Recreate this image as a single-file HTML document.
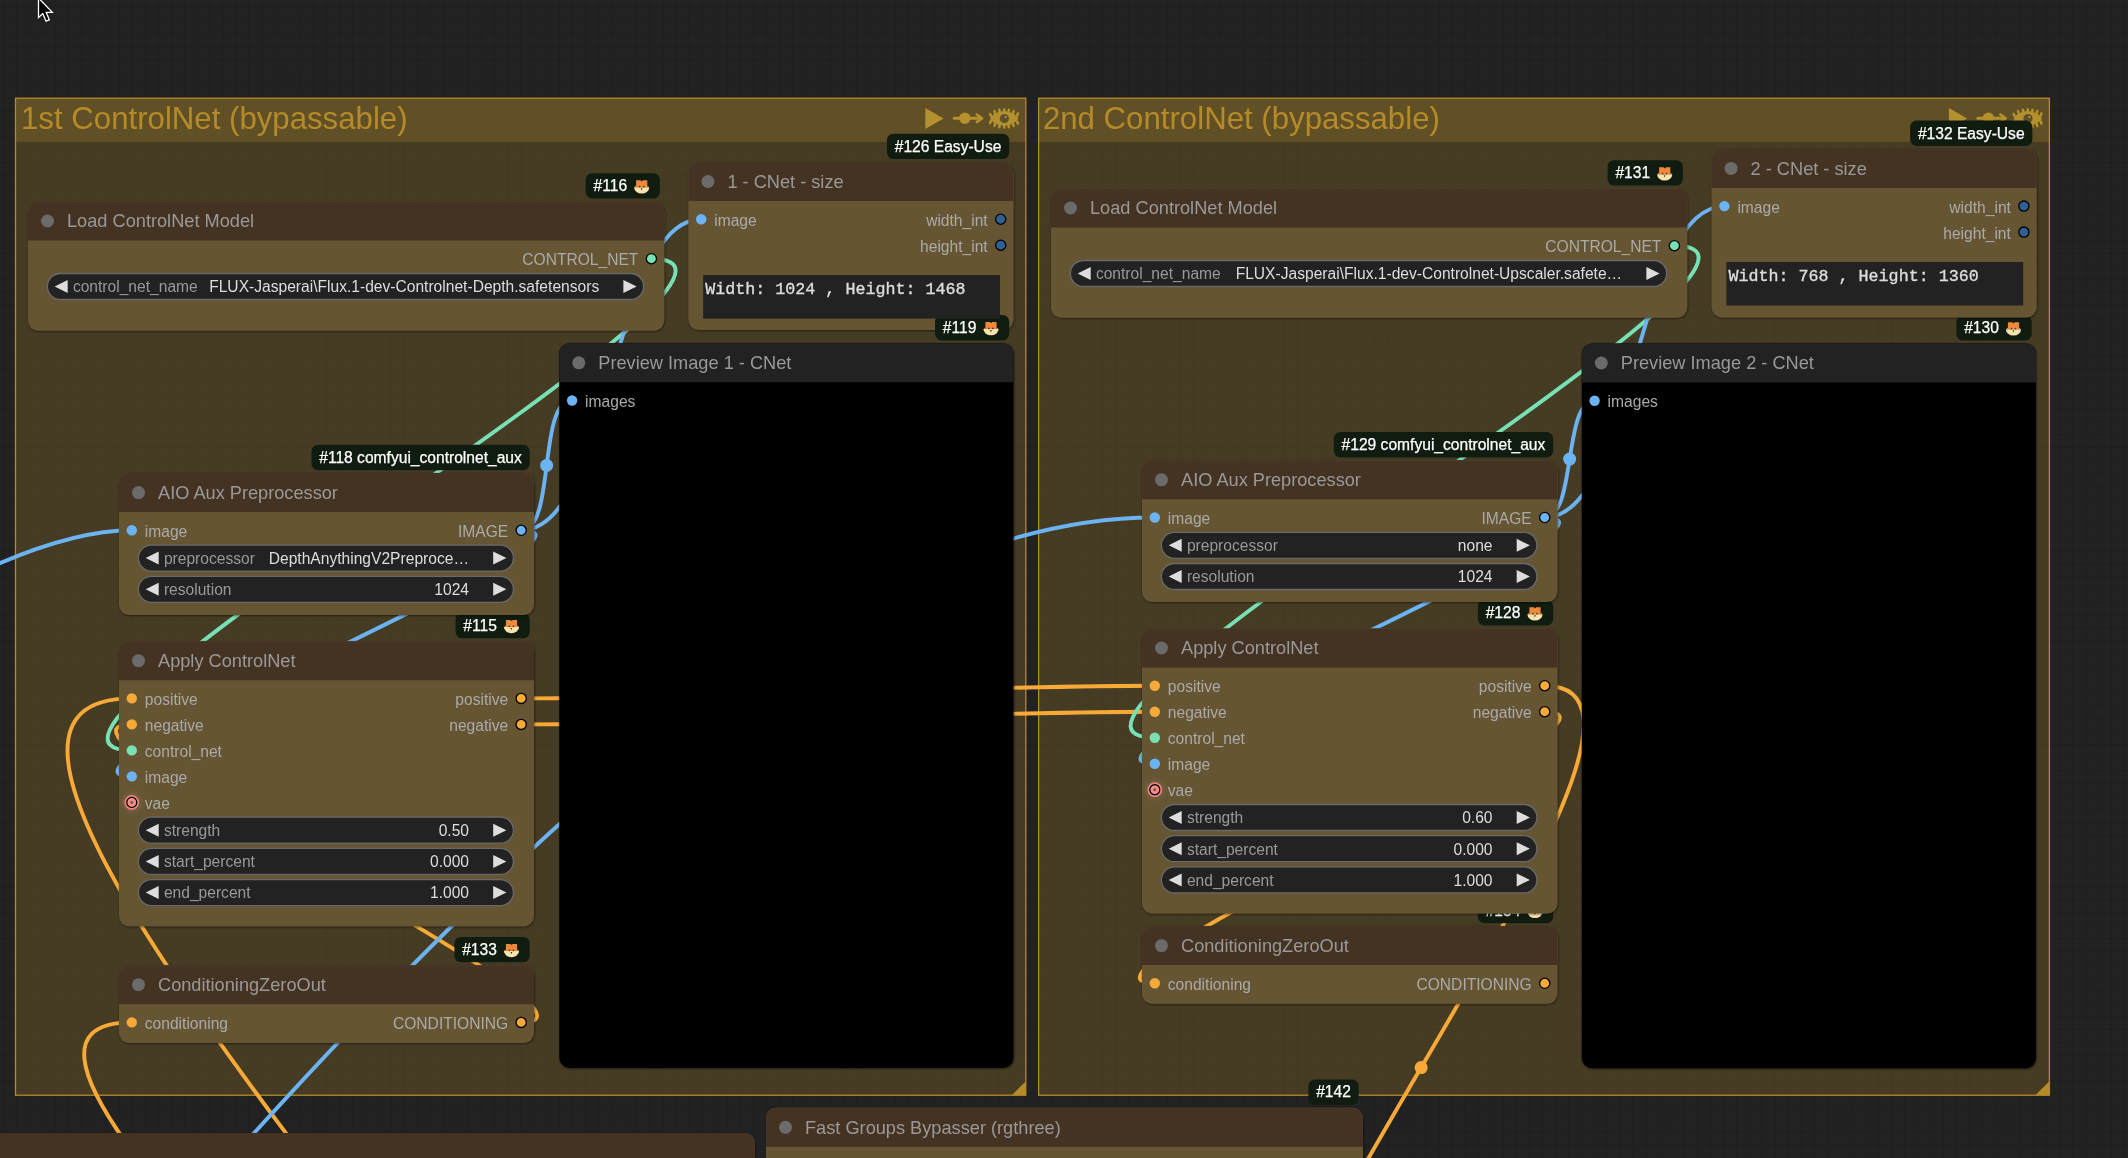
<!DOCTYPE html>
<html><head><meta charset="utf-8"><title>ComfyUI</title>
<style>html,body{margin:0;padding:0;background:#222;overflow:hidden;width:2128px;height:1158px} svg{display:block;will-change:transform}</style>
</head><body><svg width="2128" height="1158" viewBox="0 0 2128 1158"><rect x="0" y="0" width="2128" height="1158" fill="#222"/>
<defs><pattern id="grid" patternUnits="userSpaceOnUse" x="2.8" y="7.0" width="12.934" height="12.934"><rect x="0" y="0" width="1" height="12.934" fill="#000" fill-opacity="0.10"/><rect x="0" y="0" width="12.934" height="1" fill="#000" fill-opacity="0.10"/></pattern><filter id="sh" x="-5%" y="-5%" width="110%" height="110%"><feDropShadow dx="0.6" dy="0.8" stdDeviation="1.3" flood-color="#000" flood-opacity="0.55"/></filter><filter id="glow" x="-100%" y="-100%" width="300%" height="300%"><feGaussianBlur stdDeviation="2.5"/></filter></defs>
<rect x="0" y="0" width="2128" height="1158" fill="url(#grid)"/>
<rect x="15.5" y="98.2" width="1010.3" height="997.0" fill="#b58b2a" fill-opacity="0.25"/>
<rect x="15.5" y="98.2" width="1010.3" height="43.7" fill="#b58b2a" fill-opacity="0.25"/>
<rect x="15.5" y="98.2" width="1010.3" height="997.0" fill="none" stroke="#b58b2a" stroke-width="1.3"/>
<path d="M1025.8 1095.2 L1011.8 1095.2 L1025.8 1081.2 Z" fill="#b58b2a"/>
<text x="21.0" y="129.2" font-family="'Liberation Sans', sans-serif" font-size="31.2" fill="#b58b2a">1st ControlNet (bypassable)</text>
<path d="M925.3 108.0 L943.5999999999999 118.5 L925.3 129.1 Z" fill="#b3912f"/>
<path d="M954.3 118.30000000000001 H978.8" stroke="#b3912f" stroke-width="3.1" stroke-linecap="round"/>
<circle cx="964.8" cy="118.30000000000001" r="5.7" fill="#b3912f"/>
<path d="M976.8 114.5 L982.0999999999999 118.30000000000001 L976.8 122.1" fill="none" stroke="#b3912f" stroke-width="2.6" stroke-linecap="round" stroke-linejoin="round"/>
<path d="M990.90 116.01 L990.10 114.01" stroke="#b3912f" stroke-width="2.5" stroke-linecap="round"/>
<path d="M990.90 120.99 L990.10 122.99" stroke="#b3912f" stroke-width="2.5" stroke-linecap="round"/>
<path d="M995.00 113.09 L994.45 111.09" stroke="#b3912f" stroke-width="2.5" stroke-linecap="round"/>
<path d="M995.00 123.91 L994.45 125.91" stroke="#b3912f" stroke-width="2.5" stroke-linecap="round"/>
<path d="M999.60 111.78 L999.32 109.78" stroke="#b3912f" stroke-width="2.5" stroke-linecap="round"/>
<path d="M999.60 125.22 L999.32 127.22" stroke="#b3912f" stroke-width="2.5" stroke-linecap="round"/>
<path d="M1004.20 111.40 L1004.20 109.40" stroke="#b3912f" stroke-width="2.5" stroke-linecap="round"/>
<path d="M1004.20 125.60 L1004.20 127.60" stroke="#b3912f" stroke-width="2.5" stroke-linecap="round"/>
<path d="M1008.60 111.75 L1008.86 109.75" stroke="#b3912f" stroke-width="2.5" stroke-linecap="round"/>
<path d="M1008.60 125.25 L1008.86 127.25" stroke="#b3912f" stroke-width="2.5" stroke-linecap="round"/>
<path d="M1013.10 112.97 L1013.63 110.97" stroke="#b3912f" stroke-width="2.5" stroke-linecap="round"/>
<path d="M1013.10 124.03 L1013.63 126.03" stroke="#b3912f" stroke-width="2.5" stroke-linecap="round"/>
<path d="M1017.10 115.53 L1017.87 113.53" stroke="#b3912f" stroke-width="2.5" stroke-linecap="round"/>
<path d="M1017.10 121.47 L1017.87 123.47" stroke="#b3912f" stroke-width="2.5" stroke-linecap="round"/>
<path d="M989.9999999999999 118.5 C996.1999999999999 108.9 1012.1999999999999 108.9 1018.4 118.5 C1012.1999999999999 128.1 996.1999999999999 128.1 989.9999999999999 118.5 Z" fill="#b3912f"/>
<circle cx="1004.4" cy="118.5" r="4.6" fill="#5f5128"/>
<circle cx="1005.8" cy="116.9" r="1.1" fill="#b3912f"/>
<rect x="1038.6" y="98.2" width="1010.8000000000002" height="997.0" fill="#b58b2a" fill-opacity="0.25"/>
<rect x="1038.6" y="98.2" width="1010.8000000000002" height="43.7" fill="#b58b2a" fill-opacity="0.25"/>
<rect x="1038.6" y="98.2" width="1010.8000000000002" height="997.0" fill="none" stroke="#b58b2a" stroke-width="1.3"/>
<path d="M2049.4 1095.2 L2035.4 1095.2 L2049.4 1081.2 Z" fill="#b58b2a"/>
<text x="1042.8999999999999" y="129.2" font-family="'Liberation Sans', sans-serif" font-size="31.2" fill="#b58b2a">2nd ControlNet (bypassable)</text>
<path d="M1948.9 108.0 L1967.2 118.5 L1948.9 129.1 Z" fill="#b3912f"/>
<path d="M1977.9 118.30000000000001 H2002.4" stroke="#b3912f" stroke-width="3.1" stroke-linecap="round"/>
<circle cx="1988.4" cy="118.30000000000001" r="5.7" fill="#b3912f"/>
<path d="M2000.4 114.5 L2005.7 118.30000000000001 L2000.4 122.1" fill="none" stroke="#b3912f" stroke-width="2.6" stroke-linecap="round" stroke-linejoin="round"/>
<path d="M2014.50 116.01 L2013.70 114.01" stroke="#b3912f" stroke-width="2.5" stroke-linecap="round"/>
<path d="M2014.50 120.99 L2013.70 122.99" stroke="#b3912f" stroke-width="2.5" stroke-linecap="round"/>
<path d="M2018.60 113.09 L2018.05 111.09" stroke="#b3912f" stroke-width="2.5" stroke-linecap="round"/>
<path d="M2018.60 123.91 L2018.05 125.91" stroke="#b3912f" stroke-width="2.5" stroke-linecap="round"/>
<path d="M2023.20 111.78 L2022.92 109.78" stroke="#b3912f" stroke-width="2.5" stroke-linecap="round"/>
<path d="M2023.20 125.22 L2022.92 127.22" stroke="#b3912f" stroke-width="2.5" stroke-linecap="round"/>
<path d="M2027.80 111.40 L2027.80 109.40" stroke="#b3912f" stroke-width="2.5" stroke-linecap="round"/>
<path d="M2027.80 125.60 L2027.80 127.60" stroke="#b3912f" stroke-width="2.5" stroke-linecap="round"/>
<path d="M2032.20 111.75 L2032.46 109.75" stroke="#b3912f" stroke-width="2.5" stroke-linecap="round"/>
<path d="M2032.20 125.25 L2032.46 127.25" stroke="#b3912f" stroke-width="2.5" stroke-linecap="round"/>
<path d="M2036.70 112.97 L2037.23 110.97" stroke="#b3912f" stroke-width="2.5" stroke-linecap="round"/>
<path d="M2036.70 124.03 L2037.23 126.03" stroke="#b3912f" stroke-width="2.5" stroke-linecap="round"/>
<path d="M2040.70 115.53 L2041.47 113.53" stroke="#b3912f" stroke-width="2.5" stroke-linecap="round"/>
<path d="M2040.70 121.47 L2041.47 123.47" stroke="#b3912f" stroke-width="2.5" stroke-linecap="round"/>
<path d="M2013.6000000000001 118.5 C2019.8000000000002 108.9 2035.8000000000002 108.9 2042.0000000000002 118.5 C2035.8000000000002 128.1 2019.8000000000002 128.1 2013.6000000000001 118.5 Z" fill="#b3912f"/>
<circle cx="2028.0000000000002" cy="118.5" r="4.6" fill="#5f5128"/>
<circle cx="2029.4" cy="116.9" r="1.1" fill="#b3912f"/>
<path d="M651.40 258.70 C830.24 258.70 -47.04 750.40 131.80 750.40" fill="none" stroke="#77e1b5" stroke-width="3.9"/>
<circle cx="391.60" cy="504.55" r="6.5" fill="#77e1b5"/>
<path d="M521.20 530.30 C556.06 530.30 537.24 400.50 572.10 400.50" fill="none" stroke="#6cb3f3" stroke-width="3.9"/>
<circle cx="546.65" cy="465.40" r="6.5" fill="#6cb3f3"/>
<path d="M521.20 530.30 C611.06 530.30 611.34 219.20 701.20 219.20" fill="none" stroke="#6cb3f3" stroke-width="3.9"/>
<circle cx="611.20" cy="374.75" r="6.5" fill="#6cb3f3"/>
<path d="M521.20 530.30 C636.36 530.30 16.64 776.40 131.80 776.40" fill="none" stroke="#6cb3f3" stroke-width="3.9"/>
<circle cx="326.50" cy="653.35" r="6.5" fill="#6cb3f3"/>
<path d="M-637.00 882.50 C-425.59 882.50 -79.61 530.30 131.80 530.30" fill="none" stroke="#6cb3f3" stroke-width="3.9"/>
<circle cx="-252.60" cy="706.40" r="6.5" fill="#6cb3f3"/>
<path d="M521.20 698.40 C679.63 698.40 996.37 685.70 1154.80 685.70" fill="none" stroke="#f7aa37" stroke-width="3.9"/>
<circle cx="838.00" cy="692.05" r="6.5" fill="#f7aa37"/>
<path d="M521.20 724.40 C679.63 724.40 996.37 711.70 1154.80 711.70" fill="none" stroke="#f7aa37" stroke-width="3.9"/>
<circle cx="838.00" cy="718.05" r="6.5" fill="#f7aa37"/>
<path d="M521.20 1022.40 C643.79 1022.40 9.21 724.40 131.80 724.40" fill="none" stroke="#f7aa37" stroke-width="3.9"/>
<circle cx="326.50" cy="873.40" r="6.5" fill="#f7aa37"/>
<path d="M817.80 2055.90 C1198.05 2055.90 -248.45 698.40 131.80 698.40" fill="none" stroke="#f7aa37" stroke-width="3.9"/>
<circle cx="474.80" cy="1377.15" r="6.5" fill="#f7aa37"/>
<path d="M853.00 2047.70 C1166.39 2047.70 -181.59 1022.40 131.80 1022.40" fill="none" stroke="#f7aa37" stroke-width="3.9"/>
<circle cx="492.40" cy="1535.05" r="6.5" fill="#f7aa37"/>
<path d="M-1171.30 2343.10 C-432.06 2343.10 415.56 517.50 1154.80 517.50" fill="none" stroke="#6cb3f3" stroke-width="3.9"/>
<circle cx="-8.25" cy="1430.30" r="6.5" fill="#6cb3f3"/>
<path d="M1674.40 245.70 C1853.29 245.70 975.91 737.70 1154.80 737.70" fill="none" stroke="#77e1b5" stroke-width="3.9"/>
<circle cx="1414.60" cy="491.70" r="6.5" fill="#77e1b5"/>
<path d="M1544.70 517.50 C1576.45 517.50 1562.85 400.70 1594.60 400.70" fill="none" stroke="#6cb3f3" stroke-width="3.9"/>
<circle cx="1569.65" cy="459.10" r="6.5" fill="#6cb3f3"/>
<path d="M1544.70 517.50 C1634.58 517.50 1634.52 206.10 1724.40 206.10" fill="none" stroke="#6cb3f3" stroke-width="3.9"/>
<circle cx="1634.55" cy="361.80" r="6.5" fill="#6cb3f3"/>
<path d="M1544.70 517.50 C1659.98 517.50 1039.52 763.70 1154.80 763.70" fill="none" stroke="#6cb3f3" stroke-width="3.9"/>
<circle cx="1349.75" cy="640.60" r="6.5" fill="#6cb3f3"/>
<path d="M1544.70 685.70 C1745.37 685.70 1096.93 1449.40 1297.60 1449.40" fill="none" stroke="#f7aa37" stroke-width="3.9"/>
<circle cx="1421.15" cy="1067.55" r="6.5" fill="#f7aa37"/>
<path d="M1544.70 711.70 C1663.49 711.70 1036.01 983.30 1154.80 983.30" fill="none" stroke="#f7aa37" stroke-width="3.9"/>
<circle cx="1349.75" cy="847.50" r="6.5" fill="#f7aa37"/>
<g filter="url(#sh)"><rect x="-200" y="1133" width="955" height="200" rx="10.4" fill="#665533"/></g>
<path d="M-200 1172 V1143.4 A10.4 10.4 0 0 1 -189.6 1133 H744.6 A10.4 10.4 0 0 1 755 1143.4 V1172 Z" fill="#443322"/>
<circle cx="-180.5" cy="1152.5" r="6.5" fill="#6b6b6b"/>
<g filter="url(#sh)"><rect x="766" y="1107.8" width="597" height="200" rx="10.4" fill="#665533"/></g>
<path d="M766 1146.8 V1118.2 A10.4 10.4 0 0 1 776.4 1107.8 H1352.6 A10.4 10.4 0 0 1 1363 1118.2 V1146.8 Z" fill="#443322"/>
<circle cx="785.5" cy="1127.3" r="6.5" fill="#6b6b6b"/>
<text x="805" y="1133.7" font-family="'Liberation Sans', sans-serif" font-size="18.2" fill="#999">Fast Groups Bypasser (rgthree)</text>
<rect x="1308.40" y="1079.50" width="50.30" height="25.4" rx="6.5" fill="#111c10"/>
<text x="1316.20" y="1097.40" font-family="'Liberation Sans', sans-serif" font-size="15.6" fill="#fff" stroke="#fff" stroke-width="0.25">#142</text>
<g filter="url(#sh)"><rect x="28" y="201.5" width="636.2" height="129.2" rx="10.4" fill="#665533"/></g>
<path d="M28 240.5 V211.9 A10.4 10.4 0 0 1 38.4 201.5 H653.8000000000001 A10.4 10.4 0 0 1 664.2 211.9 V240.5 Z" fill="#443322"/>
<circle cx="47.5" cy="221.0" r="6.5" fill="#6b6b6b"/>
<text x="67" y="227.4" font-family="'Liberation Sans', sans-serif" font-size="18.2" fill="#999">Load ControlNet Model</text>
<circle cx="651.40" cy="258.70" r="5.1" fill="#77e1b5" stroke="#000" stroke-width="1.3"/>
<text x="638.40" y="265.30" font-family="'Liberation Sans', sans-serif" font-size="15.6" fill="#aaa" text-anchor="end">CONTROL_NET</text>
<rect x="47.40" y="273.50" width="596.20" height="26.0" rx="13.0" fill="#222" stroke="#6a6a6a" stroke-width="1.3"/>
<path d="M67.70 280.00 L54.70 286.50 L67.70 293.00 Z" fill="#ddd"/>
<path d="M623.40 280.00 L636.60 286.50 L623.40 293.00 Z" fill="#ddd"/>
<text x="72.90" y="292.30" font-family="'Liberation Sans', sans-serif" font-size="15.6" fill="#999">control_net_name</text>
<text x="599.20" y="292.30" font-family="'Liberation Sans', sans-serif" font-size="15.6" fill="#ddd" text-anchor="end">FLUX-Jasperai\Flux.1-dev-Controlnet-Depth.safetensors</text>
<rect x="585.75" y="173.20" width="74.15" height="25.4" rx="6.5" fill="#111c10"/>
<text x="593.55" y="191.10" font-family="'Liberation Sans', sans-serif" font-size="15.6" fill="#fff" stroke="#fff" stroke-width="0.25">#116</text>
<g transform="translate(641.70,180.10)"><path d="M-5.6 0.2 H-1.2 L0 1.3 L1.2 0.2 H5.6 V7.2 H-5.6 Z" fill="#f0883a"/><path d="M-7.6 7.1 H7.6 A7.6 6.3 0 0 1 -7.6 7.1 Z" fill="#fbe3ad"/><path d="M-7.6 7.2 L-5.6 5.5 V7.2 Z M7.6 7.2 L5.6 5.5 V7.2 Z" fill="#f0883a"/><circle cx="-2.1" cy="6.5" r="0.9" fill="#5a3a20"/><circle cx="1.9" cy="6.5" r="0.9" fill="#5a3a20"/><path d="M-1 8.2 H0.8 L-0.1 10.5 Z" fill="#4a3020"/></g>
<g filter="url(#sh)"><rect x="688.4" y="162" width="325.1" height="168" rx="10.4" fill="#665533"/></g>
<path d="M688.4 201 V172.4 A10.4 10.4 0 0 1 698.8 162 H1003.1 A10.4 10.4 0 0 1 1013.5 172.4 V201 Z" fill="#443322"/>
<circle cx="707.9" cy="181.5" r="6.5" fill="#6b6b6b"/>
<text x="727.4" y="187.9" font-family="'Liberation Sans', sans-serif" font-size="18.2" fill="#999">1 - CNet - size</text>
<circle cx="701.20" cy="219.20" r="5.2" fill="#6cb3f3"/>
<text x="714.20" y="225.80" font-family="'Liberation Sans', sans-serif" font-size="15.6" fill="#aaa">image</text>
<circle cx="1000.70" cy="219.20" r="5.1" fill="#2f5f96" stroke="#000" stroke-width="1.3"/>
<text x="987.70" y="225.80" font-family="'Liberation Sans', sans-serif" font-size="15.6" fill="#aaa" text-anchor="end">width_int</text>
<circle cx="1000.70" cy="245.20" r="5.1" fill="#2f5f96" stroke="#000" stroke-width="1.3"/>
<text x="987.70" y="251.80" font-family="'Liberation Sans', sans-serif" font-size="15.6" fill="#aaa" text-anchor="end">height_int</text>
<rect x="886.94" y="133.70" width="122.26" height="25.4" rx="6.5" fill="#111c10"/>
<text x="894.74" y="151.60" font-family="'Liberation Sans', sans-serif" font-size="15.6" fill="#fff" stroke="#fff" stroke-width="0.25">#126 Easy-Use</text>
<g filter="url(#sh)"><rect x="559.3" y="343.3" width="454.2" height="724.8" rx="10.4" fill="#000"/></g>
<path d="M559.3 382.3 V353.7 A10.4 10.4 0 0 1 569.6999999999999 343.3 H1003.1 A10.4 10.4 0 0 1 1013.5 353.7 V382.3 Z" fill="#222"/>
<circle cx="578.8" cy="362.8" r="6.5" fill="#6b6b6b"/>
<text x="598.3" y="369.2" font-family="'Liberation Sans', sans-serif" font-size="18.2" fill="#999">Preview Image 1 - CNet</text>
<circle cx="572.10" cy="400.50" r="5.2" fill="#6cb3f3"/>
<text x="585.10" y="407.10" font-family="'Liberation Sans', sans-serif" font-size="15.6" fill="#aaa">images</text>
<rect x="935.05" y="315.00" width="74.15" height="25.4" rx="6.5" fill="#111c10"/>
<text x="942.85" y="332.90" font-family="'Liberation Sans', sans-serif" font-size="15.6" fill="#fff" stroke="#fff" stroke-width="0.25">#119</text>
<g transform="translate(991.00,321.90)"><path d="M-5.6 0.2 H-1.2 L0 1.3 L1.2 0.2 H5.6 V7.2 H-5.6 Z" fill="#f0883a"/><path d="M-7.6 7.1 H7.6 A7.6 6.3 0 0 1 -7.6 7.1 Z" fill="#fbe3ad"/><path d="M-7.6 7.2 L-5.6 5.5 V7.2 Z M7.6 7.2 L5.6 5.5 V7.2 Z" fill="#f0883a"/><circle cx="-2.1" cy="6.5" r="0.9" fill="#5a3a20"/><circle cx="1.9" cy="6.5" r="0.9" fill="#5a3a20"/><path d="M-1 8.2 H0.8 L-0.1 10.5 Z" fill="#4a3020"/></g>
<g filter="url(#sh)"><rect x="119" y="965.2" width="415" height="77.8" rx="10.4" fill="#665533"/></g>
<path d="M119 1004.2 V975.6 A10.4 10.4 0 0 1 129.4 965.2 H523.6 A10.4 10.4 0 0 1 534 975.6 V1004.2 Z" fill="#443322"/>
<circle cx="138.5" cy="984.7" r="6.5" fill="#6b6b6b"/>
<text x="158" y="991.1" font-family="'Liberation Sans', sans-serif" font-size="18.2" fill="#999">ConditioningZeroOut</text>
<circle cx="131.80" cy="1022.40" r="5.2" fill="#f7aa37"/>
<text x="144.80" y="1029.00" font-family="'Liberation Sans', sans-serif" font-size="15.6" fill="#aaa">conditioning</text>
<circle cx="521.20" cy="1022.40" r="5.1" fill="#f7aa37" stroke="#000" stroke-width="1.3"/>
<text x="508.20" y="1029.00" font-family="'Liberation Sans', sans-serif" font-size="15.6" fill="#aaa" text-anchor="end">CONDITIONING</text>
<rect x="454.40" y="936.90" width="75.30" height="25.4" rx="6.5" fill="#111c10"/>
<text x="462.20" y="954.80" font-family="'Liberation Sans', sans-serif" font-size="15.6" fill="#fff" stroke="#fff" stroke-width="0.25">#133</text>
<g transform="translate(511.50,943.80)"><path d="M-5.6 0.2 H-1.2 L0 1.3 L1.2 0.2 H5.6 V7.2 H-5.6 Z" fill="#f0883a"/><path d="M-7.6 7.1 H7.6 A7.6 6.3 0 0 1 -7.6 7.1 Z" fill="#fbe3ad"/><path d="M-7.6 7.2 L-5.6 5.5 V7.2 Z M7.6 7.2 L5.6 5.5 V7.2 Z" fill="#f0883a"/><circle cx="-2.1" cy="6.5" r="0.9" fill="#5a3a20"/><circle cx="1.9" cy="6.5" r="0.9" fill="#5a3a20"/><path d="M-1 8.2 H0.8 L-0.1 10.5 Z" fill="#4a3020"/></g>
<g filter="url(#sh)"><rect x="119" y="641.2" width="415" height="285" rx="10.4" fill="#665533"/></g>
<path d="M119 680.2 V651.6 A10.4 10.4 0 0 1 129.4 641.2 H523.6 A10.4 10.4 0 0 1 534 651.6 V680.2 Z" fill="#443322"/>
<circle cx="138.5" cy="660.7" r="6.5" fill="#6b6b6b"/>
<text x="158" y="667.1" font-family="'Liberation Sans', sans-serif" font-size="18.2" fill="#999">Apply ControlNet</text>
<circle cx="131.80" cy="698.40" r="5.2" fill="#f7aa37"/>
<text x="144.80" y="705.00" font-family="'Liberation Sans', sans-serif" font-size="15.6" fill="#aaa">positive</text>
<circle cx="131.80" cy="724.40" r="5.2" fill="#f7aa37"/>
<text x="144.80" y="731.00" font-family="'Liberation Sans', sans-serif" font-size="15.6" fill="#aaa">negative</text>
<circle cx="131.80" cy="750.40" r="5.2" fill="#77e1b5"/>
<text x="144.80" y="757.00" font-family="'Liberation Sans', sans-serif" font-size="15.6" fill="#aaa">control_net</text>
<circle cx="131.80" cy="776.40" r="5.2" fill="#6cb3f3"/>
<text x="144.80" y="783.00" font-family="'Liberation Sans', sans-serif" font-size="15.6" fill="#aaa">image</text>
<circle cx="131.80" cy="802.40" r="9" fill="#fff" fill-opacity="0.10" filter="url(#glow)"/>
<circle cx="131.80" cy="802.40" r="6.3" fill="none" stroke="#f07c7c" stroke-width="2.2"/>
<circle cx="131.80" cy="802.40" r="4.9" fill="none" stroke="#000" stroke-width="1.4"/>
<circle cx="131.80" cy="802.40" r="3.0" fill="none" stroke="#ff8f8f" stroke-width="2.6"/>
<text x="144.80" y="809.00" font-family="'Liberation Sans', sans-serif" font-size="15.6" fill="#aaa">vae</text>
<circle cx="521.20" cy="698.40" r="5.1" fill="#f7aa37" stroke="#000" stroke-width="1.3"/>
<text x="508.20" y="705.00" font-family="'Liberation Sans', sans-serif" font-size="15.6" fill="#aaa" text-anchor="end">positive</text>
<circle cx="521.20" cy="724.40" r="5.1" fill="#f7aa37" stroke="#000" stroke-width="1.3"/>
<text x="508.20" y="731.00" font-family="'Liberation Sans', sans-serif" font-size="15.6" fill="#aaa" text-anchor="end">negative</text>
<rect x="138.40" y="817.20" width="375.00" height="26.0" rx="13.0" fill="#222" stroke="#6a6a6a" stroke-width="1.3"/>
<path d="M158.70 823.70 L145.70 830.20 L158.70 836.70 Z" fill="#ddd"/>
<path d="M493.20 823.70 L506.40 830.20 L493.20 836.70 Z" fill="#ddd"/>
<text x="163.90" y="836.00" font-family="'Liberation Sans', sans-serif" font-size="15.6" fill="#999">strength</text>
<text x="469.00" y="836.00" font-family="'Liberation Sans', sans-serif" font-size="15.6" fill="#ddd" text-anchor="end">0.50</text>
<rect x="138.40" y="848.40" width="375.00" height="26.0" rx="13.0" fill="#222" stroke="#6a6a6a" stroke-width="1.3"/>
<path d="M158.70 854.90 L145.70 861.40 L158.70 867.90 Z" fill="#ddd"/>
<path d="M493.20 854.90 L506.40 861.40 L493.20 867.90 Z" fill="#ddd"/>
<text x="163.90" y="867.20" font-family="'Liberation Sans', sans-serif" font-size="15.6" fill="#999">start_percent</text>
<text x="469.00" y="867.20" font-family="'Liberation Sans', sans-serif" font-size="15.6" fill="#ddd" text-anchor="end">0.000</text>
<rect x="138.40" y="879.60" width="375.00" height="26.0" rx="13.0" fill="#222" stroke="#6a6a6a" stroke-width="1.3"/>
<path d="M158.70 886.10 L145.70 892.60 L158.70 899.10 Z" fill="#ddd"/>
<path d="M493.20 886.10 L506.40 892.60 L493.20 899.10 Z" fill="#ddd"/>
<text x="163.90" y="898.40" font-family="'Liberation Sans', sans-serif" font-size="15.6" fill="#999">end_percent</text>
<text x="469.00" y="898.40" font-family="'Liberation Sans', sans-serif" font-size="15.6" fill="#ddd" text-anchor="end">1.000</text>
<rect x="455.55" y="612.90" width="74.15" height="25.4" rx="6.5" fill="#111c10"/>
<text x="463.35" y="630.80" font-family="'Liberation Sans', sans-serif" font-size="15.6" fill="#fff" stroke="#fff" stroke-width="0.25">#115</text>
<g transform="translate(511.50,619.80)"><path d="M-5.6 0.2 H-1.2 L0 1.3 L1.2 0.2 H5.6 V7.2 H-5.6 Z" fill="#f0883a"/><path d="M-7.6 7.1 H7.6 A7.6 6.3 0 0 1 -7.6 7.1 Z" fill="#fbe3ad"/><path d="M-7.6 7.2 L-5.6 5.5 V7.2 Z M7.6 7.2 L5.6 5.5 V7.2 Z" fill="#f0883a"/><circle cx="-2.1" cy="6.5" r="0.9" fill="#5a3a20"/><circle cx="1.9" cy="6.5" r="0.9" fill="#5a3a20"/><path d="M-1 8.2 H0.8 L-0.1 10.5 Z" fill="#4a3020"/></g>
<g filter="url(#sh)"><rect x="119" y="473.1" width="415" height="141.9" rx="10.4" fill="#665533"/></g>
<path d="M119 512.1 V483.5 A10.4 10.4 0 0 1 129.4 473.1 H523.6 A10.4 10.4 0 0 1 534 483.5 V512.1 Z" fill="#443322"/>
<circle cx="138.5" cy="492.6" r="6.5" fill="#6b6b6b"/>
<text x="158" y="499.0" font-family="'Liberation Sans', sans-serif" font-size="18.2" fill="#999">AIO Aux Preprocessor</text>
<circle cx="131.80" cy="530.30" r="5.2" fill="#6cb3f3"/>
<text x="144.80" y="536.90" font-family="'Liberation Sans', sans-serif" font-size="15.6" fill="#aaa">image</text>
<circle cx="521.20" cy="530.30" r="5.1" fill="#6cb3f3" stroke="#000" stroke-width="1.3"/>
<text x="508.20" y="536.90" font-family="'Liberation Sans', sans-serif" font-size="15.6" fill="#aaa" text-anchor="end">IMAGE</text>
<rect x="138.40" y="545.10" width="375.00" height="26.0" rx="13.0" fill="#222" stroke="#6a6a6a" stroke-width="1.3"/>
<path d="M158.70 551.60 L145.70 558.10 L158.70 564.60 Z" fill="#ddd"/>
<path d="M493.20 551.60 L506.40 558.10 L493.20 564.60 Z" fill="#ddd"/>
<text x="163.90" y="563.90" font-family="'Liberation Sans', sans-serif" font-size="15.6" fill="#999">preprocessor</text>
<text x="469.00" y="563.90" font-family="'Liberation Sans', sans-serif" font-size="15.6" fill="#ddd" text-anchor="end">DepthAnythingV2Preproce…</text>
<rect x="138.40" y="576.30" width="375.00" height="26.0" rx="13.0" fill="#222" stroke="#6a6a6a" stroke-width="1.3"/>
<path d="M158.70 582.80 L145.70 589.30 L158.70 595.80 Z" fill="#ddd"/>
<path d="M493.20 582.80 L506.40 589.30 L493.20 595.80 Z" fill="#ddd"/>
<text x="163.90" y="595.10" font-family="'Liberation Sans', sans-serif" font-size="15.6" fill="#999">resolution</text>
<text x="469.00" y="595.10" font-family="'Liberation Sans', sans-serif" font-size="15.6" fill="#ddd" text-anchor="end">1024</text>
<rect x="311.46" y="444.80" width="218.24" height="25.4" rx="6.5" fill="#111c10"/>
<text x="319.26" y="462.70" font-family="'Liberation Sans', sans-serif" font-size="15.6" fill="#fff" stroke="#fff" stroke-width="0.25">#118 comfyui_controlnet_aux</text>
<g filter="url(#sh)"><rect x="1581.8" y="343.5" width="454.2" height="724.8" rx="10.4" fill="#000"/></g>
<path d="M1581.8 382.5 V353.9 A10.4 10.4 0 0 1 1592.2 343.5 H2025.6 A10.4 10.4 0 0 1 2036.0 353.9 V382.5 Z" fill="#222"/>
<circle cx="1601.3" cy="363.0" r="6.5" fill="#6b6b6b"/>
<text x="1620.8" y="369.4" font-family="'Liberation Sans', sans-serif" font-size="18.2" fill="#999">Preview Image 2 - CNet</text>
<circle cx="1594.60" cy="400.70" r="5.2" fill="#6cb3f3"/>
<text x="1607.60" y="407.30" font-family="'Liberation Sans', sans-serif" font-size="15.6" fill="#aaa">images</text>
<rect x="1956.40" y="315.20" width="75.30" height="25.4" rx="6.5" fill="#111c10"/>
<text x="1964.20" y="333.10" font-family="'Liberation Sans', sans-serif" font-size="15.6" fill="#fff" stroke="#fff" stroke-width="0.25">#130</text>
<g transform="translate(2013.50,322.10)"><path d="M-5.6 0.2 H-1.2 L0 1.3 L1.2 0.2 H5.6 V7.2 H-5.6 Z" fill="#f0883a"/><path d="M-7.6 7.1 H7.6 A7.6 6.3 0 0 1 -7.6 7.1 Z" fill="#fbe3ad"/><path d="M-7.6 7.2 L-5.6 5.5 V7.2 Z M7.6 7.2 L5.6 5.5 V7.2 Z" fill="#f0883a"/><circle cx="-2.1" cy="6.5" r="0.9" fill="#5a3a20"/><circle cx="1.9" cy="6.5" r="0.9" fill="#5a3a20"/><path d="M-1 8.2 H0.8 L-0.1 10.5 Z" fill="#4a3020"/></g>
<g filter="url(#sh)"><rect x="1051" y="188.5" width="636.2" height="129.2" rx="10.4" fill="#665533"/></g>
<path d="M1051 227.5 V198.9 A10.4 10.4 0 0 1 1061.4 188.5 H1676.8 A10.4 10.4 0 0 1 1687.2 198.9 V227.5 Z" fill="#443322"/>
<circle cx="1070.5" cy="208.0" r="6.5" fill="#6b6b6b"/>
<text x="1090" y="214.4" font-family="'Liberation Sans', sans-serif" font-size="18.2" fill="#999">Load ControlNet Model</text>
<circle cx="1674.40" cy="245.70" r="5.1" fill="#77e1b5" stroke="#000" stroke-width="1.3"/>
<text x="1661.40" y="252.30" font-family="'Liberation Sans', sans-serif" font-size="15.6" fill="#aaa" text-anchor="end">CONTROL_NET</text>
<rect x="1070.40" y="260.50" width="596.20" height="26.0" rx="13.0" fill="#222" stroke="#6a6a6a" stroke-width="1.3"/>
<path d="M1090.70 267.00 L1077.70 273.50 L1090.70 280.00 Z" fill="#ddd"/>
<path d="M1646.40 267.00 L1659.60 273.50 L1646.40 280.00 Z" fill="#ddd"/>
<text x="1095.90" y="279.30" font-family="'Liberation Sans', sans-serif" font-size="15.6" fill="#999">control_net_name</text>
<text x="1622.20" y="279.30" font-family="'Liberation Sans', sans-serif" font-size="15.6" fill="#ddd" text-anchor="end">FLUX-Jasperai\Flux.1-dev-Controlnet-Upscaler.safete…</text>
<rect x="1607.60" y="160.20" width="75.30" height="25.4" rx="6.5" fill="#111c10"/>
<text x="1615.40" y="178.10" font-family="'Liberation Sans', sans-serif" font-size="15.6" fill="#fff" stroke="#fff" stroke-width="0.25">#131</text>
<g transform="translate(1664.70,167.10)"><path d="M-5.6 0.2 H-1.2 L0 1.3 L1.2 0.2 H5.6 V7.2 H-5.6 Z" fill="#f0883a"/><path d="M-7.6 7.1 H7.6 A7.6 6.3 0 0 1 -7.6 7.1 Z" fill="#fbe3ad"/><path d="M-7.6 7.2 L-5.6 5.5 V7.2 Z M7.6 7.2 L5.6 5.5 V7.2 Z" fill="#f0883a"/><circle cx="-2.1" cy="6.5" r="0.9" fill="#5a3a20"/><circle cx="1.9" cy="6.5" r="0.9" fill="#5a3a20"/><path d="M-1 8.2 H0.8 L-0.1 10.5 Z" fill="#4a3020"/></g>
<g filter="url(#sh)"><rect x="1711.6" y="148.9" width="325.1" height="168.5" rx="10.4" fill="#665533"/></g>
<path d="M1711.6 187.9 V159.3 A10.4 10.4 0 0 1 1722.0 148.9 H2026.2999999999997 A10.4 10.4 0 0 1 2036.6999999999998 159.3 V187.9 Z" fill="#443322"/>
<circle cx="1731.1" cy="168.4" r="6.5" fill="#6b6b6b"/>
<text x="1750.6" y="174.8" font-family="'Liberation Sans', sans-serif" font-size="18.2" fill="#999">2 - CNet - size</text>
<circle cx="1724.40" cy="206.10" r="5.2" fill="#6cb3f3"/>
<text x="1737.40" y="212.70" font-family="'Liberation Sans', sans-serif" font-size="15.6" fill="#aaa">image</text>
<circle cx="2023.90" cy="206.10" r="5.1" fill="#2f5f96" stroke="#000" stroke-width="1.3"/>
<text x="2010.90" y="212.70" font-family="'Liberation Sans', sans-serif" font-size="15.6" fill="#aaa" text-anchor="end">width_int</text>
<circle cx="2023.90" cy="232.10" r="5.1" fill="#2f5f96" stroke="#000" stroke-width="1.3"/>
<text x="2010.90" y="238.70" font-family="'Liberation Sans', sans-serif" font-size="15.6" fill="#aaa" text-anchor="end">height_int</text>
<rect x="1910.14" y="120.60" width="122.26" height="25.4" rx="6.5" fill="#111c10"/>
<text x="1917.94" y="138.50" font-family="'Liberation Sans', sans-serif" font-size="15.6" fill="#fff" stroke="#fff" stroke-width="0.25">#132 Easy-Use</text>
<g filter="url(#sh)"><rect x="1142" y="926.1" width="415.5" height="77.6" rx="10.4" fill="#665533"/></g>
<path d="M1142 965.1 V936.5 A10.4 10.4 0 0 1 1152.4 926.1 H1547.1 A10.4 10.4 0 0 1 1557.5 936.5 V965.1 Z" fill="#443322"/>
<circle cx="1161.5" cy="945.6" r="6.5" fill="#6b6b6b"/>
<text x="1181" y="952.0" font-family="'Liberation Sans', sans-serif" font-size="18.2" fill="#999">ConditioningZeroOut</text>
<circle cx="1154.80" cy="983.30" r="5.2" fill="#f7aa37"/>
<text x="1167.80" y="989.90" font-family="'Liberation Sans', sans-serif" font-size="15.6" fill="#aaa">conditioning</text>
<circle cx="1544.70" cy="983.30" r="5.1" fill="#f7aa37" stroke="#000" stroke-width="1.3"/>
<text x="1531.70" y="989.90" font-family="'Liberation Sans', sans-serif" font-size="15.6" fill="#aaa" text-anchor="end">CONDITIONING</text>
<rect x="1477.90" y="897.80" width="75.30" height="25.4" rx="6.5" fill="#111c10"/>
<text x="1485.70" y="915.70" font-family="'Liberation Sans', sans-serif" font-size="15.6" fill="#fff" stroke="#fff" stroke-width="0.25">#134</text>
<g transform="translate(1535.00,904.70)"><path d="M-5.6 0.2 H-1.2 L0 1.3 L1.2 0.2 H5.6 V7.2 H-5.6 Z" fill="#f0883a"/><path d="M-7.6 7.1 H7.6 A7.6 6.3 0 0 1 -7.6 7.1 Z" fill="#fbe3ad"/><path d="M-7.6 7.2 L-5.6 5.5 V7.2 Z M7.6 7.2 L5.6 5.5 V7.2 Z" fill="#f0883a"/><circle cx="-2.1" cy="6.5" r="0.9" fill="#5a3a20"/><circle cx="1.9" cy="6.5" r="0.9" fill="#5a3a20"/><path d="M-1 8.2 H0.8 L-0.1 10.5 Z" fill="#4a3020"/></g>
<g filter="url(#sh)"><rect x="1142" y="628.5" width="415.5" height="285" rx="10.4" fill="#665533"/></g>
<path d="M1142 667.5 V638.9 A10.4 10.4 0 0 1 1152.4 628.5 H1547.1 A10.4 10.4 0 0 1 1557.5 638.9 V667.5 Z" fill="#443322"/>
<circle cx="1161.5" cy="648.0" r="6.5" fill="#6b6b6b"/>
<text x="1181" y="654.4" font-family="'Liberation Sans', sans-serif" font-size="18.2" fill="#999">Apply ControlNet</text>
<circle cx="1154.80" cy="685.70" r="5.2" fill="#f7aa37"/>
<text x="1167.80" y="692.30" font-family="'Liberation Sans', sans-serif" font-size="15.6" fill="#aaa">positive</text>
<circle cx="1154.80" cy="711.70" r="5.2" fill="#f7aa37"/>
<text x="1167.80" y="718.30" font-family="'Liberation Sans', sans-serif" font-size="15.6" fill="#aaa">negative</text>
<circle cx="1154.80" cy="737.70" r="5.2" fill="#77e1b5"/>
<text x="1167.80" y="744.30" font-family="'Liberation Sans', sans-serif" font-size="15.6" fill="#aaa">control_net</text>
<circle cx="1154.80" cy="763.70" r="5.2" fill="#6cb3f3"/>
<text x="1167.80" y="770.30" font-family="'Liberation Sans', sans-serif" font-size="15.6" fill="#aaa">image</text>
<circle cx="1154.80" cy="789.70" r="9" fill="#fff" fill-opacity="0.10" filter="url(#glow)"/>
<circle cx="1154.80" cy="789.70" r="6.3" fill="none" stroke="#f07c7c" stroke-width="2.2"/>
<circle cx="1154.80" cy="789.70" r="4.9" fill="none" stroke="#000" stroke-width="1.4"/>
<circle cx="1154.80" cy="789.70" r="3.0" fill="none" stroke="#ff8f8f" stroke-width="2.6"/>
<text x="1167.80" y="796.30" font-family="'Liberation Sans', sans-serif" font-size="15.6" fill="#aaa">vae</text>
<circle cx="1544.70" cy="685.70" r="5.1" fill="#f7aa37" stroke="#000" stroke-width="1.3"/>
<text x="1531.70" y="692.30" font-family="'Liberation Sans', sans-serif" font-size="15.6" fill="#aaa" text-anchor="end">positive</text>
<circle cx="1544.70" cy="711.70" r="5.1" fill="#f7aa37" stroke="#000" stroke-width="1.3"/>
<text x="1531.70" y="718.30" font-family="'Liberation Sans', sans-serif" font-size="15.6" fill="#aaa" text-anchor="end">negative</text>
<rect x="1161.40" y="804.50" width="375.50" height="26.0" rx="13.0" fill="#222" stroke="#6a6a6a" stroke-width="1.3"/>
<path d="M1181.70 811.00 L1168.70 817.50 L1181.70 824.00 Z" fill="#ddd"/>
<path d="M1516.70 811.00 L1529.90 817.50 L1516.70 824.00 Z" fill="#ddd"/>
<text x="1186.90" y="823.30" font-family="'Liberation Sans', sans-serif" font-size="15.6" fill="#999">strength</text>
<text x="1492.50" y="823.30" font-family="'Liberation Sans', sans-serif" font-size="15.6" fill="#ddd" text-anchor="end">0.60</text>
<rect x="1161.40" y="835.70" width="375.50" height="26.0" rx="13.0" fill="#222" stroke="#6a6a6a" stroke-width="1.3"/>
<path d="M1181.70 842.20 L1168.70 848.70 L1181.70 855.20 Z" fill="#ddd"/>
<path d="M1516.70 842.20 L1529.90 848.70 L1516.70 855.20 Z" fill="#ddd"/>
<text x="1186.90" y="854.50" font-family="'Liberation Sans', sans-serif" font-size="15.6" fill="#999">start_percent</text>
<text x="1492.50" y="854.50" font-family="'Liberation Sans', sans-serif" font-size="15.6" fill="#ddd" text-anchor="end">0.000</text>
<rect x="1161.40" y="866.90" width="375.50" height="26.0" rx="13.0" fill="#222" stroke="#6a6a6a" stroke-width="1.3"/>
<path d="M1181.70 873.40 L1168.70 879.90 L1181.70 886.40 Z" fill="#ddd"/>
<path d="M1516.70 873.40 L1529.90 879.90 L1516.70 886.40 Z" fill="#ddd"/>
<text x="1186.90" y="885.70" font-family="'Liberation Sans', sans-serif" font-size="15.6" fill="#999">end_percent</text>
<text x="1492.50" y="885.70" font-family="'Liberation Sans', sans-serif" font-size="15.6" fill="#ddd" text-anchor="end">1.000</text>
<rect x="1477.90" y="600.20" width="75.30" height="25.4" rx="6.5" fill="#111c10"/>
<text x="1485.70" y="618.10" font-family="'Liberation Sans', sans-serif" font-size="15.6" fill="#fff" stroke="#fff" stroke-width="0.25">#128</text>
<g transform="translate(1535.00,607.10)"><path d="M-5.6 0.2 H-1.2 L0 1.3 L1.2 0.2 H5.6 V7.2 H-5.6 Z" fill="#f0883a"/><path d="M-7.6 7.1 H7.6 A7.6 6.3 0 0 1 -7.6 7.1 Z" fill="#fbe3ad"/><path d="M-7.6 7.2 L-5.6 5.5 V7.2 Z M7.6 7.2 L5.6 5.5 V7.2 Z" fill="#f0883a"/><circle cx="-2.1" cy="6.5" r="0.9" fill="#5a3a20"/><circle cx="1.9" cy="6.5" r="0.9" fill="#5a3a20"/><path d="M-1 8.2 H0.8 L-0.1 10.5 Z" fill="#4a3020"/></g>
<g filter="url(#sh)"><rect x="1142" y="460.3" width="415.5" height="141.7" rx="10.4" fill="#665533"/></g>
<path d="M1142 499.3 V470.7 A10.4 10.4 0 0 1 1152.4 460.3 H1547.1 A10.4 10.4 0 0 1 1557.5 470.7 V499.3 Z" fill="#443322"/>
<circle cx="1161.5" cy="479.8" r="6.5" fill="#6b6b6b"/>
<text x="1181" y="486.2" font-family="'Liberation Sans', sans-serif" font-size="18.2" fill="#999">AIO Aux Preprocessor</text>
<circle cx="1154.80" cy="517.50" r="5.2" fill="#6cb3f3"/>
<text x="1167.80" y="524.10" font-family="'Liberation Sans', sans-serif" font-size="15.6" fill="#aaa">image</text>
<circle cx="1544.70" cy="517.50" r="5.1" fill="#6cb3f3" stroke="#000" stroke-width="1.3"/>
<text x="1531.70" y="524.10" font-family="'Liberation Sans', sans-serif" font-size="15.6" fill="#aaa" text-anchor="end">IMAGE</text>
<rect x="1161.40" y="532.30" width="375.50" height="26.0" rx="13.0" fill="#222" stroke="#6a6a6a" stroke-width="1.3"/>
<path d="M1181.70 538.80 L1168.70 545.30 L1181.70 551.80 Z" fill="#ddd"/>
<path d="M1516.70 538.80 L1529.90 545.30 L1516.70 551.80 Z" fill="#ddd"/>
<text x="1186.90" y="551.10" font-family="'Liberation Sans', sans-serif" font-size="15.6" fill="#999">preprocessor</text>
<text x="1492.50" y="551.10" font-family="'Liberation Sans', sans-serif" font-size="15.6" fill="#ddd" text-anchor="end">none</text>
<rect x="1161.40" y="563.50" width="375.50" height="26.0" rx="13.0" fill="#222" stroke="#6a6a6a" stroke-width="1.3"/>
<path d="M1181.70 570.00 L1168.70 576.50 L1181.70 583.00 Z" fill="#ddd"/>
<path d="M1516.70 570.00 L1529.90 576.50 L1516.70 583.00 Z" fill="#ddd"/>
<text x="1186.90" y="582.30" font-family="'Liberation Sans', sans-serif" font-size="15.6" fill="#999">resolution</text>
<text x="1492.50" y="582.30" font-family="'Liberation Sans', sans-serif" font-size="15.6" fill="#ddd" text-anchor="end">1024</text>
<rect x="1333.80" y="432.00" width="219.40" height="25.4" rx="6.5" fill="#111c10"/>
<text x="1341.60" y="449.90" font-family="'Liberation Sans', sans-serif" font-size="15.6" fill="#fff" stroke="#fff" stroke-width="0.25">#129 comfyui_controlnet_aux</text>
<rect x="703.20" y="275.10" width="296.80" height="43.5" fill="#222"/>
<text x="705.20" y="294.40" font-family="'Liberation Mono', monospace" font-size="16.7" fill="#ddd" stroke="#ddd" stroke-width="0.35">Width: 1024 , Height: 1468</text>
<rect x="1726.40" y="262.00" width="296.80" height="43.5" fill="#222"/>
<text x="1728.40" y="281.30" font-family="'Liberation Mono', monospace" font-size="16.7" fill="#ddd" stroke="#ddd" stroke-width="0.35">Width: 768 , Height: 1360</text>
<path d="M39.3 -1 L39.3 18.5 L43.6 14.5 L46.8 22 L50 20.6 L46.9 13.3 L53 13.3 Z" fill="#000" fill-opacity="0.25" filter="url(#glow)"/>
<path d="M38.5 -2 L38.5 17.5 L42.8 13.5 L46 21.2 L49.3 19.8 L46.2 12.3 L52.3 12.3 Z" fill="#000" stroke="#fff" stroke-width="1.3" stroke-linejoin="miter"/></svg></body></html>
